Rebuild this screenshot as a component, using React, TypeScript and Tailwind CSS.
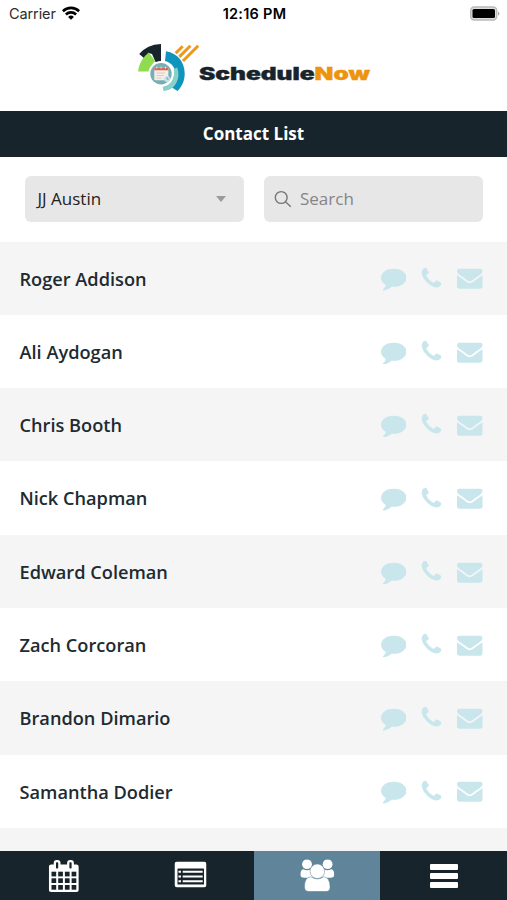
import type { ReactNode } from 'react'

const CONTACTS = [
  'Roger Addison',
  'Ali Aydogan',
  'Chris Booth',
  'Nick Chapman',
  'Edward Coleman',
  'Zach Corcoran',
  'Brandon Dimario',
  'Samantha Dodier',
]

// glyphs share a 1792 unit grid
function Glyph({ d, className }: { d: string; className: string }) {
  return (
    <svg viewBox="0 0 1792 1792" fill="currentColor" className={className} aria-hidden="true">
      <path d={d} />
    </svg>
  )
}

const COMMENT =
  'M1792 896q0 174-120 321.5t-326 233-450 85.5q-70 0-145-8-198 175-460 242-49 14-114 22-17 2-30.5-9t-17.5-29v-1q-3-4-.5-12t2-10 4.5-9.5l6-9 7-8.5 8-9q7-8 31-34.5t34.5-38 31-39.5 32.5-51 27-59 26-76q-157-89-247.5-220t-90.5-281q0-130 71-248.5t191-204.5 286-136.5 348-50.5q244 0 450 85.5t326 233 120 321.5z'
const PHONE =
  'M1600 1240q0 27-10 70.5t-21 68.5q-21 50-122 106-94 51-186 51-27 0-53-3.5t-57.5-12.5-47-14.5-55.5-20.5-49-18q-98-35-175-83-127-79-264-216t-216-264q-48-77-83-175-3-9-18-49t-20.5-55.5-14.5-47-12.5-57.5-3.5-53q0-92 51-186 56-101 106-122 25-11 68.5-21t70.5-10q14 0 21 3 18 6 53 76 11 19 30 54t35 63.5 31 53.5q3 4 17.5 25t21.5 35.5 7 28.5q0 20-28.5 50t-62 55-62 53-28.5 46q0 9 5 22.5t8.5 20.5 14 24 11.5 19q76 137 174 235t235 174q2 1 19 11.5t24 14 20.5 8.5 22.5 5q18 0 46-28.5t53-62 55-62 50-28.5q14 0 28.5 7t35.5 21.5 25 17.5q25 15 53.5 31t63.5 35 54 30q70 35 76 53 3 7 3 21z'
const ENVELOPE =
  'M1792 710v794q0 66-47 113t-113 47h-1472q-66 0-113-47t-47-113v-794q44 49 101 87 362 246 497 345 57 42 92.5 65.5t94.5 48 110 24.5h2q51 0 110-24.5t94.5-48 92.5-65.5q170-123 498-345 57-39 100-87zm0-294q0 79-49 151t-122 123q-376 261-468 325-10 7-42.5 31t-54 38.5-52 32.5-57.5 27-50 9h-2q-23 0-50-9t-57.5-27-52-32.5-54-38.5-42.5-31q-91-64-262-182.5t-205-142.5q-62-42-117-115.5t-55-136.5q0-78 41.5-130t118.5-52h1472q65 0 112.5 47t47.5 113z'

function StatusBar() {
  return (
    <div className="grid h-7 grid-cols-3 items-center pl-[9px] pr-[7px] font-['Inter',sans-serif] text-black">
      <div className="flex items-center gap-[6px]">
        <span className="text-[14.5px] tracking-[-0.1px] text-[#2b2b2b]">Carrier</span>
        <svg viewBox="0 0 18 14" className="h-[14px] w-[18px] -translate-y-px">
          <g fill="none" stroke="currentColor" strokeWidth="2.6">
            <path d="M.9 5.2a11.6 11.6 0 0 1 16.2 0" />
            <path d="M3.9 8.5a7.3 7.3 0 0 1 10.2 0" />
          </g>
          <path d="M6.1 10.9a4.2 4.2 0 0 1 5.8 0L9 13.8z" />
        </svg>
      </div>
      <span className="text-center text-[14.5px] font-semibold tracking-[0.25px]">12:16 PM</span>
      <svg viewBox="0 0 31 15" className="h-[15px] w-[31px] justify-self-end -translate-y-px">
        <rect x="1.7" y="1" width="26" height="13" rx="3.5" fill="#ddd" stroke="#b9b9b9" strokeWidth="1.4" />
        <rect x="3.5" y="3" width="22.5" height="9" rx="1.5" />
        <path d="M29 5.2q2.8 2.3 0 4.6z" fill="#a8a8a8" />
      </svg>
    </div>
  )
}

function Logo() {
  return (
    <svg viewBox="0 0 236 52" className="h-[52px] w-[236px]" role="img" aria-label="ScheduleNow">
      {/* ring segments */}
      <path d="M3.2 13Q11 3.6 25 3v17.500q-3 .2-5 1.500l-4-9-3.500-1-4 5.500z" fill="#18242b" />
      <path d="M12.700 11.500l6.500 8.500q-4 3.500-4.800 10.500H2Q3.600 18.500 12.700 11.500z" fill="#8fdc4e" />
      <path d="M30 10.200C41.500 12 48.700 21 48.700 32.500c0 7-2.600 13-7.200 17.500l-5.500-3.500c4-3.500 4.500-8 4-13-.8-7-4-11.500-11-13.500z" fill="#0e94bd" />
      <path d="M41.200 26.500C45.500 39 38 49.500 27.500 50l-.8-4.200C34.500 44.500 38.800 38 37.800 28z" fill="#86d1c8" />
      {/* rays */}
      <path d="M39.700 12.200l7-7M43.300 15.900L54.400 4.800M47 20L62.200 4.800" stroke="#ed981d" strokeWidth="3" />
      {/* calendar badge */}
      <circle cx="25" cy="32.700" r="12.700" fill="#fff" />
      <circle cx="25" cy="32.700" r="10.700" fill="#75afb4" />
      <rect x="18.300" y="26.800" width="14" height="12.500" rx="1" fill="#f4eee9" />
      <path d="M18.300 26.800h14v2.500h-14z" fill="#dd6553" />
      <path d="M20.800 25.600v2M25.100 25.600v2M29.500 25.600v2" stroke="#e7e2df" />
      <path d="M20.500 32h8.500M20.500 34.500h7M20.500 37h5" stroke="#e6c7be" />
      <circle cx="31.100" cy="38" r="3" fill="#c6e2e8" />
      <path d="M31.100 36.200v2h1.600" fill="none" stroke="#4b93a3" strokeWidth=".7" />
      <text
        x="63"
        y="39"
        textLength="171"
        lengthAdjust="spacingAndGlyphs"
        fill="#18242b"
        stroke="#18242b"
        strokeWidth=".35"
        className="font-['Inter',sans-serif] text-[17px] font-black"
      >
        Schedule
        <tspan fill="#ed940f" stroke="#ed940f">
          Now
        </tspan>
      </text>
    </svg>
  )
}

const CELL_X = [2.7, 9.4, 16.1, 22.8]
const CELL_Y = [11.7, 18.3, 25]

function CalendarIcon() {
  return (
    <svg viewBox="0 0 30 32" className="h-8 w-[30px] translate-x-[0.8px]">
      <rect y="4.500" width="30" height="27.500" rx="2.500" fill="#fff" />
      {[8.3, 21.7].map((x) => (
        <g key={x}>
          <rect x={x - 3.4} width="6.8" height="10" rx="3" fill="#fff" />
          <rect x={x - 1.1} y="2.2" width="2.2" height="6.300" rx=".7" fill="#18242b" />
        </g>
      ))}
      {CELL_Y.map((y) =>
        CELL_X.map((x) => <rect key={`${x}-${y}`} x={x} y={y} width="4.7" height="4.7" fill="#18242b" />),
      )}
    </svg>
  )
}

function ListIcon() {
  return (
    <svg viewBox="0 0 32 26" className="h-[26px] w-[32px] translate-x-[0.5px] -translate-y-[1.5px]">
      <rect width="32" height="26" rx="3" fill="#fff" />
      <rect x="3" y="7" width="26.5" height="16" rx=".6" fill="#18242b" />
      <path d="M4 10.2h2.5M8.2 10.2h20M4 14.9h2.5M8.2 14.9h20M4 19.7h2.5M8.2 19.7h20" stroke="#fff" strokeWidth="2" />
    </svg>
  )
}

function UsersIcon() {
  return (
    <svg viewBox="0 0 34 32" className="h-8 w-[34px] translate-x-[0.3px] -translate-y-[0.5px]" fill="#fff">
      <circle cx="6.7" cy="4.7" r="4.9" />
      <circle cx="27.3" cy="4.7" r="4.9" />
      <path d="M3 9.800q3.500 1.600 7.200.3-.5 4.800 2.700 8.200H4Q0 18.300 0 15q0-4.500 3-5.200z" />
      <path d="M31 9.800q-3.500 1.600-7.200.3.5 4.800-2.700 8.200H30q4 0 4-3.300 0-4.500-3-5.200z" />
      <g stroke="#60859a" strokeWidth=".5">
        <path d="M10.500 17.300q6.500 4.300 13 0 6 .5 6.300 10.200 0 4.600-4.500 4.600H9q-4.800 0-4.800-4.600 0-9.700 6.300-10.200z" />
        <circle cx="17" cy="11.800" r="7.300" />
      </g>
    </svg>
  )
}

function NavItem({ active, children }: { active?: boolean; children: ReactNode }) {
  return (
    <button className={`flex items-center justify-center ${active ? 'bg-[#60859a]' : 'bg-[#18242b]'}`}>
      {children}
    </button>
  )
}

export default function App() {
  return (
    <div className="flex h-[900px] w-[507px] flex-col overflow-hidden bg-white font-['Open_Sans',sans-serif] text-[#202b31]">
      <StatusBar />
      <div className="flex h-[83px] justify-center pt-[13px]">
        <Logo />
      </div>

      <header className="flex h-[46px] shrink-0 items-center justify-center bg-[#18242b] text-[17px] font-bold text-white">
        Contact List
      </header>

      <div className="flex h-[84.5px] shrink-0 gap-[20.5px] pl-[25px] pt-[19px]">
        <div className="flex h-[46px] w-[218.5px] items-center justify-between rounded-md bg-[#e7e7e7] pl-[12.5px] pr-[18px] text-[17px] text-[#222]">
          <span>JJ Austin</span>
          <svg viewBox="0 0 10 6" className="h-[6px] w-[10px]" fill="#9b9b9b">
            <path d="M0 0h10L5 6z" />
          </svg>
        </div>
        <div className="flex h-[46px] w-[218.5px] items-center gap-[8px] rounded-md bg-[#e7e7e7] pl-[10px] text-[17px] text-[#858585]">
          <svg viewBox="0 0 18 18" className="size-[18px]" fill="none" stroke="#777" strokeWidth="1.4">
            <circle cx="7.2" cy="7.5" r="5.9" />
            <path d="M11.5 11.8l5.3 5" />
          </svg>
          <span>Search</span>
        </div>
      </div>

      <ul className="min-h-0 flex-1 overflow-hidden">
        {CONTACTS.map((name) => (
          <li
            key={name}
            className="flex h-[73.3px] items-center justify-between pl-[19.5px] pr-[24.5px] text-[18.2px] font-semibold odd:bg-[#f5f5f5]"
          >
            <span className="pt-[2px]">{name}</span>
            <span className="flex items-center text-[#c9e6ed]">
              <Glyph d={COMMENT} className="size-[25.5px]" />
              <Glyph d={PHONE} className="ml-[12.5px] size-[25px]" />
              <Glyph d={ENVELOPE} className="ml-[13.5px] size-[25.5px]" />
            </span>
          </li>
        ))}
        <li className="h-[73.3px] bg-[#f5f5f5]" />
      </ul>

      <nav className="grid h-[49px] shrink-0 grid-cols-4">
        <NavItem>
          <CalendarIcon />
        </NavItem>
        <NavItem>
          <ListIcon />
        </NavItem>
        <NavItem active>
          <UsersIcon />
        </NavItem>
        <NavItem>
          <svg viewBox="0 0 28 24" className="h-6 w-7" fill="#fff">
            <rect width="28" height="6" rx="1" />
            <rect y="9" width="28" height="6" rx="1" />
            <rect y="18" width="28" height="6" rx="1" />
          </svg>
        </NavItem>
      </nav>
    </div>
  )
}
